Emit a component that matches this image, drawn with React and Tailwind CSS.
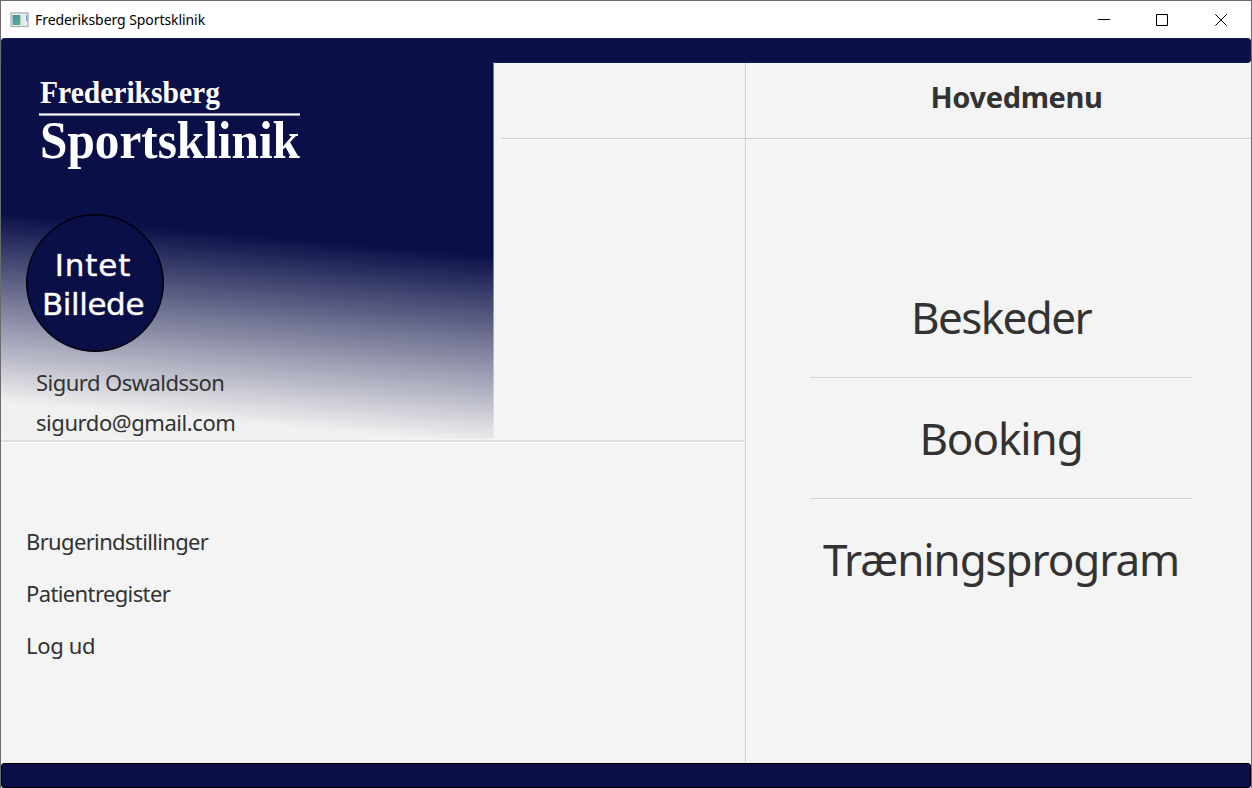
import React from 'react';

function AppIcon() {
  return (
    <svg width="19" height="16" viewBox="0 0 19 16" className="shrink-0">
      <defs>
        <linearGradient id="pane" x1="0" y1="0" x2="1" y2="1">
          <stop offset="0" stopColor="#4a86b0" />
          <stop offset="1" stopColor="#5db784" />
        </linearGradient>
      </defs>
      <rect x="1" y="1" width="17" height="13.5" fill="#f4f4f4" stroke="#b0b4b8" strokeWidth="1.4" />
      <rect x="2.5" y="3" width="8" height="10" fill="url(#pane)" />
      <rect x="11" y="3" width="4" height="10" fill="#e6e8ea" />
      <rect x="16" y="3" width="1.4" height="6" fill="#6fa8b8" />
    </svg>
  );
}

function TitleBar() {
  return (
    <header className="flex h-[37px] shrink-0 items-center bg-white pl-[9px]">
      <AppIcon />
      <span className="ml-[6px] text-[14px] tracking-[-0.07px] text-black">Frederiksberg Sportsklinik</span>
      <div className="ml-auto flex h-full items-center pr-[24px]">
        <svg width="129" height="13" viewBox="0 0 129 13" fill="none" stroke="#000">
          <path d="M0 6.5H12" />
          <path d="M58.5 1.5h11v11h-11z" />
          <path d="M117.3 1.3l11.4 11.4M128.7 1.3l-11.4 11.4" />
        </svg>
      </div>
    </header>
  );
}

function Logo() {
  return (
    <svg width="290" height="100" viewBox="0 0 290 100" className="block" fill="#fff">
      <text x="2" y="29" fontFamily="'Liberation Serif', serif" fontWeight="bold" fontSize="32" textLength="180" lengthAdjust="spacingAndGlyphs">Frederiksberg</text>
      <rect x="1" y="39.4" width="261" height="2.2" />
      <text x="2" y="83.5" fontFamily="'Liberation Serif', serif" fontWeight="bold" fontSize="52" textLength="260" lengthAdjust="spacingAndGlyphs">Sportsklinik</text>
    </svg>
  );
}

function Profile() {
  return (
    <section className="-mt-px flex h-[377px] w-[493px] flex-col rounded-br-[3px] bg-[linear-gradient(184.9deg,#0a0f48_193px,#f0f0f0_381px)] shadow-[inset_-1px_0_0_rgba(244,244,244,0.45)]">
      <div className="ml-[37px] mt-[12px]">
        <Logo />
      </div>
      <div className="ml-[25px] mt-[40px] flex h-[138px] w-[138px] shrink-0 flex-col items-center justify-center rounded-full border border-black bg-[#0a0f48] pr-[4px] pt-[4px] font-['DejaVu_Sans',sans-serif] text-[31px] leading-[39px] text-white shadow-[inset_0_0_0_0.5px_#000] [-webkit-text-stroke:0.6px_#ffffffb0]">
        <span className="tracking-[0.9px]">Intet</span>
        <span className="tracking-[-0.4px]">Billede</span>
      </div>
      <div className="ml-[35px] mt-[10px] text-[22px] leading-[40px]">
        <div className="tracking-[-0.53px]">Sigurd Oswaldsson</div>
        <div className="tracking-[-0.43px]">sigurdo@gmail.com</div>
      </div>
    </section>
  );
}

function Account() {
  return (
    <div className="flex w-[744px] flex-col">
      <div className="flex h-[377px]">
        <Profile />
        <div className="ml-[7px] mt-[75px] h-[2px] flex-1 border-b border-t border-b-[#f8f8f8] border-t-[#cbcbcb]" />
      </div>
      <div className="mr-[1px] h-[3px] border-b border-b-white bg-[#dedede]" />
      <nav className="mt-[72px] flex flex-col items-start pl-[25px] text-[22px] leading-[52px]">
        <a className="tracking-[-0.65px]">Brugerindstillinger</a>
        <a className="tracking-[-0.62px]">Patientregister</a>
        <a className="tracking-[-0.35px]">Log ud</a>
      </nav>
    </div>
  );
}

function MenuRule() {
  return <div className="h-[2px] w-[382px] border-b border-t border-b-[#f8f8f8] border-t-[#d4d4d4]" />;
}

function MainMenu() {
  return (
    <div className="flex flex-1 flex-col">
      <h1 className="h-[75px] pl-[35px] pt-[12px] text-center text-[29px] font-bold leading-[44px] tracking-[-0.35px]">Hovedmenu</h1>
      <div className="-ml-px h-[2px] shrink-0 border-b border-t border-b-[#f8f8f8] border-t-[#cbcbcb]" />
      <nav className="mt-[118px] flex flex-col items-center pl-[4px] text-[44px]">
        <a className="flex h-[119px] items-center pb-[2px] tracking-[-1.6px]">Beskeder</a>
        <MenuRule />
        <a className="flex h-[119px] items-center pb-[2px] tracking-[-1.1px]">Booking</a>
        <MenuRule />
        <a className="flex h-[119px] items-center pb-[2px] tracking-[-1.1px]">Træningsprogram</a>
      </nav>
    </div>
  );
}

export default function App() {
  return (
    <div className="flex h-[788px] w-[1252px] flex-col overflow-hidden border border-b-0 border-[#6b6b6b] bg-[#f4f4f4] font-['Noto_Sans','Open_Sans',sans-serif] text-[#323232]">
      <TitleBar />
      <div className="shrink-0 bg-white">
        <div className="h-[25px] rounded-[3px] rounded-bl-none border border-[#161b56] bg-[#0a0f48]" />
      </div>
      <main className="flex h-[700px] shrink-0">
        <Account />
        <div className="w-[2px] shrink-0 border-l border-r border-l-[#cbcbcb] border-r-[#fafafa]" />
        <MainMenu />
      </main>
      <footer className="h-[25px] shrink-0 rounded-[3px] border border-black bg-[#0a0f48]" />
    </div>
  );
}
